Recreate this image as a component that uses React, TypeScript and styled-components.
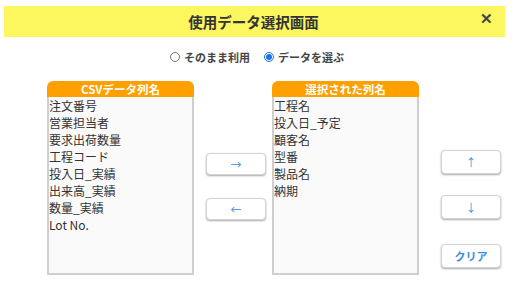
import React, { useState } from "react"
import styled, { createGlobalStyle } from "styled-components"

const GlobalStyle = createGlobalStyle`
  html, body {
    margin: 0;
    padding: 0;
    background: #ffffff;
  }
  body {
    font-family: "Noto Sans CJK JP", "Noto Sans", sans-serif;
    color: #333;
  }
`

const csvColumns = [
  "注文番号",
  "営業担当者",
  "要求出荷数量",
  "工程コード",
  "投入日_実績",
  "出来高_実績",
  "数量_実績",
  "Lot No.",
]

const selectedColumns = ["工程名", "投入日_予定", "顧客名", "型番", "製品名", "納期"]

export default function App() {
  const [mode, setMode] = useState("select")

  return (
    <>
      <GlobalStyle />
      <Page>
        <Header>
          <Title>使用データ選択画面</Title>
          <Close>✕</Close>
        </Header>
        <RadioRow>
          <RadioLabel>
            <Radio checked={mode === "raw"} onChange={() => setMode("raw")} />
            そのまま利用
          </RadioLabel>
          <RadioLabel>
            <Radio checked={mode === "select"} onChange={() => setMode("select")} />
            データを選ぶ
          </RadioLabel>
        </RadioRow>
        <Main>
          <ListBox>
            <ListHead>CSVデータ列名</ListHead>
            <ListBody>
              {csvColumns.map((c) => (
                <Item key={c}>{c}</Item>
              ))}
            </ListBody>
          </ListBox>
          <MoveColumn>
            <Btn $h={22}>→</Btn>
            <Btn $h={22}>←</Btn>
          </MoveColumn>
          <ListBox>
            <ListHead>選択された列名</ListHead>
            <ListBody>
              {selectedColumns.map((c) => (
                <Item key={c}>{c}</Item>
              ))}
            </ListBody>
          </ListBox>
          <OrderColumn>
            <Btn $h={24}>↑</Btn>
            <Btn $h={24}>↓</Btn>
            <Btn $h={24} $bold>クリア</Btn>
          </OrderColumn>
        </Main>
      </Page>
    </>
  )
}

const Page = styled.div`
  width: 516px;
  height: 294px;
  padding-top: 6px;
  box-sizing: border-box;
`
const Header = styled.div`
  position: relative;
  display: flex;
  justify-content: center;
  align-items: center;
  margin: 0 11px 0 4px;
  height: 31px;
  background: #fcf75e;
`
const Title = styled.div`
  font-size: 14.5px;
  font-weight: 700;
  color: #333;
  margin-right: 2px;
`
const Close = styled.div`
  position: absolute;
  right: 12px;
  top: 1px;
  font-size: 15px;
  font-weight: 700;
  color: #444;
`
const RadioRow = styled.div`
  display: flex;
  justify-content: center;
  align-items: center;
  gap: 14px;
  height: 22px;
  margin-top: 9px;
  padding-right: 2px;
`
const RadioLabel = styled.label`
  display: flex;
  align-items: center;
  gap: 4px;
  font-size: 11px;
  font-weight: 700;
  color: #444;
`
const Radio = styled.input.attrs({ type: "radio" })`
  width: 10px;
  height: 10px;
  margin: 0;
  accent-color: #1a73e8;
`
const Main = styled.div`
  display: flex;
  align-items: flex-start;
  margin-top: 13px;
  padding-left: 47px;
`
const ListBox = styled.div`
  width: 147px;
  height: 194px;
  display: flex;
  flex-direction: column;
  box-sizing: border-box;
`
const ListHead = styled.div`
  height: 17px;
  background: #ffa000;
  border-radius: 6px 6px 0 0;
  color: #fff;
  font-size: 11.5px;
  font-weight: 700;
  text-align: center;
  line-height: 17px;
`
const ListBody = styled.div`
  flex: 1;
  border: 2px solid #cfcfcf;
  border-top: none;
  background: #fafafa;
  padding-top: 0;
  margin-top: -1px;
`
const Item = styled.div`
  font-size: 12px;
  height: 17px;
  line-height: 17px;
  color: #333;
`
const MoveColumn = styled.div`
  width: 78px;
  box-sizing: border-box;
  display: flex;
  flex-direction: column;
  align-items: flex-start;
  gap: 23px;
  padding: 72px 0 0 12px;
`
const OrderColumn = styled.div`
  display: flex;
  flex-direction: column;
  gap: 21px;
  padding-top: 69px;
  margin-left: 22px;

  & > :last-child {
    margin-top: 4px;
  }
`
const Btn = styled.button<{ $h: number; $bold?: boolean }>`
  width: 60px;
  height: ${(p) => p.$h}px;
  padding: 0;
  background: #fff;
  border: 1px solid #d4d4d4;
  border-radius: 4px;
  box-shadow: 0 1px 2px rgba(0, 0, 0, 0.35);
  color: #3d8fe0;
  font-family: "Noto Sans CJK JP", sans-serif;
  font-size: 11px;
  font-weight: ${(p) => (p.$bold ? 700 : 400)};
  cursor: pointer;
`
